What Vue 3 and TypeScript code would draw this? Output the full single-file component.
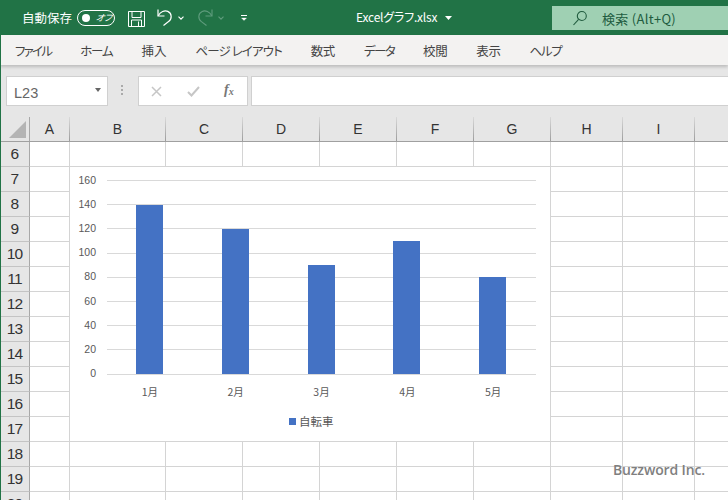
<script setup lang="ts">
const tabs = [
  { label: 'ファイル', track: -1.75 },
  { label: 'ホーム', track: -1.2 },
  { label: '挿入', track: 0 },
  { label: 'ページ レイアウト', track: -0.9 },
  { label: '数式', track: -0.4 },
  { label: 'データ', track: -1.6 },
  { label: '校閲', track: -0.4 },
  { label: '表示', track: -0.4 },
  { label: 'ヘルプ', track: -1.3 },
]
const columns = [
  { name: 'A', width: 40 },
  { name: 'B', width: 96 },
  { name: 'C', width: 77 },
  { name: 'D', width: 77 },
  { name: 'E', width: 77 },
  { name: 'F', width: 77 },
  { name: 'G', width: 77 },
  { name: 'H', width: 72 },
  { name: 'I', width: 72 },
  { name: 'J', width: 40 },
]
const rows = Array.from({ length: 15 }, (_, i) => i + 6)
const step = 24.2
const ticks = [160, 140, 120, 100, 80, 60, 40, 20, 0].map((value, i) => ({ value, top: i * step }))
const bars = [
  { label: '1月', value: 140 },
  { label: '2月', value: 120 },
  { label: '3月', value: 90 },
  { label: '4月', value: 110 },
  { label: '5月', value: 80 },
]
</script>

<template>
  <div class="app">
    <header class="title">
      <span class="autosave">自動保存</span>
      <span class="toggle"><i class="knob"></i><em>オフ</em></span>
      <svg class="save" width="17" height="16" viewBox="0 0 17 16" fill="none" stroke="#fff" stroke-width="1">
        <path d="M.5.500h16v15H.5z" />
        <path d="M4 .500v6h9v-6M3.500 15.500v-6.500h10v6.500M10.500 10.500v5" />
      </svg>
      <svg class="undo" width="16" height="17" viewBox="0 0 16 17" fill="none" stroke="#fff" stroke-width="1.200">
        <path d="M1 .500v6.500h6.500" />
        <path d="M1.200 6.800C3.500 2.800 7.500 1 10.800 2.400c4.300 1.800 4.400 7.600.8 10.200L6.500 16.500" />
      </svg>
      <svg class="chev" width="6" height="4" viewBox="0 0 6 4" fill="none" stroke="#fff" stroke-width="1.100"><path d="M.5.600 3 3.200 5.500.600" /></svg>
      <svg class="redo" width="16" height="17" viewBox="0 0 16 17" fill="none" stroke="#5f9c7d" stroke-width="1.100">
        <path d="M15 .500v6.500H8.500" />
        <path d="M14.800 6.800C12.500 2.800 8.500 1 5.200 2.400.9 4.200.8 10 4.400 12.600l5.100 3.900" />
      </svg>
      <svg class="chev dim" width="6" height="4" viewBox="0 0 6 4" fill="none" stroke="#5f9c7d" stroke-width="1.100"><path d="M.5.600 3 3.200 5.500.600" /></svg>
      <svg class="more" width="6" height="6" viewBox="0 0 6 6" fill="none" stroke="#fff" stroke-width="1">
        <path d="M0 .500h6" />
        <path d="M.5 3 3 5.500 5.500 3z" fill="#fff" stroke-width=".3" />
      </svg>
      <span class="file">Excelグラフ.xlsx</span>
      <svg class="caret" width="7" height="4" viewBox="0 0 7 4"><path d="M0 0h7L3.500 4z" fill="#fff" /></svg>
      <div class="search">
        <svg width="16" height="16" viewBox="0 0 16 16" fill="none" stroke="#215c3f" stroke-width="1.100">
          <circle cx="9.800" cy="6" r="4.500" />
          <path d="M6.600 9.300 1.500 15" />
        </svg>
        <span>検索 (Alt+Q)</span>
      </div>
    </header>

    <nav class="tabs">
      <span v-for="tab in tabs" :key="tab.label" :style="{ letterSpacing: tab.track + 'px' }">{{ tab.label }}</span>
    </nav>

    <section class="formula">
      <div class="namebox">
        <span>L23</span>
        <i class="namecaret"></i>
      </div>
      <span class="grip"></span>
      <div class="buttons">
        <svg width="11" height="11" viewBox="0 0 11 11" stroke="#c6c6c6" stroke-width="1.500"><path d="M1 1l9 9M10 1l-9 9" /></svg>
        <svg class="check" width="13" height="11" viewBox="0 0 13 11" fill="none" stroke="#c6c6c6" stroke-width="2"><path d="M1 6l3.500 3.500L12 1" /></svg>
        <span class="fx">f<sub>x</sub></span>
      </div>
      <div class="input"></div>
    </section>

    <section class="sheet">
      <div class="colhead">
        <div class="corner"><i></i></div>
        <div v-for="c in columns" :key="c.name" class="col" :style="{ width: c.width + 'px' }">{{ c.name === 'J' ? '' : c.name }}</div>
      </div>
      <div v-for="r in rows" :key="r" class="row">
        <div class="rowhead">{{ r }}</div>
        <div v-for="c in columns" :key="c.name" class="cell" :style="{ width: c.width + 'px' }"></div>
      </div>

      <div class="chart">
        <div class="plot">
          <div v-for="t in ticks" :key="t.value" class="tick" :style="{ top: t.top + 'px' }">
            <span>{{ t.value }}</span>
            <i></i>
          </div>
          <div class="bars">
            <div v-for="b in bars" :key="b.label" class="slot">
              <div class="bar" :style="{ height: (b.value * step) / 20 + 'px' }"></div>
            </div>
          </div>
        </div>
        <div class="labels">
          <span v-for="b in bars" :key="b.label">{{ b.label }}</span>
        </div>
        <div class="legend"><i></i>自転車</div>
      </div>

      <div class="mark">Buzzword Inc.</div>
    </section>
    <div class="edge"></div>
  </div>
</template>

<style>
html, body { margin: 0; background: #fff; overflow: hidden; }
</style>

<style scoped>
.app {
  width: 728px;
  height: 500px;
  overflow: hidden;
  position: relative;
  font-family: "Noto Sans CJK JP", "Open Sans", sans-serif;
  font-feature-settings: "palt";
}
.edge { position: absolute; left: 0; top: 0; bottom: 0; width: 1px; background: #217346; }
.title {
  height: 35px;
  background: #217346;
  display: flex;
  align-items: center;
  color: #fff;
  font-size: 12px;
}
.autosave { margin-left: 22px; width: 48px; font-size: 12.500px; white-space: nowrap; }
.toggle {
  margin-left: 7px;
  width: 36px;
  height: 14px;
  border: 1px solid #fff;
  border-radius: 8px;
  display: flex;
  align-items: center;
}
.knob { width: 8px; height: 8px; border-radius: 50%; background: #fff; margin-left: 4px; }
.toggle em { font-size: 9px; margin-left: 6px; transform: skewX(-10deg); }
.save { margin-left: 13px; margin-top: 2px; }
.undo { margin-left: 12px; }
.chev { margin-left: 5px; margin-top: 1px; }
.redo { margin-left: 13px; }
.chev.dim { margin-left: 5px; }
.more { margin-left: 17px; margin-top: 1px; }
.file { position: absolute; left: 356px; top: 8px; line-height: 17px; font-size: 12px; letter-spacing: -0.2px; white-space: nowrap; }
.caret { position: absolute; left: 445px; top: 16px; }
.search {
  position: absolute;
  left: 552px;
  top: 6px;
  width: 176px;
  height: 24px;
  background: #9fd0b3;
  display: flex;
  align-items: center;
  color: #215c3f;
  font-size: 13px;
  letter-spacing: 0.3px;
}
.search svg { margin-left: 20px; }
.search span { margin-left: 14px; }
.tabs {
  height: 30px;
  background: #f3f2f1;
  display: flex;
  align-items: center;
  font-size: 12.500px;
  color: #444;
  padding-left: 15px;
  gap: 29px;
  box-shadow: 0 2px 3px rgba(0, 0, 0, 0.18);
  position: relative;
  white-space: nowrap;
}
.formula {
  height: 52px;
  background: #e6e6e6;
  display: flex;
  padding: 11px 0 0 6px;
  box-sizing: border-box;
  align-items: flex-start;
}
.namebox {
  width: 102px;
  height: 30px;
  background: #fff;
  border: 1px solid #d0d0d0;
  box-sizing: border-box;
  display: flex;
  align-items: center;
  justify-content: space-between;
  padding: 3px 4px 0 7px;
  font: 14.500px "Liberation Sans", sans-serif;
  color: #666;
}
.namecaret { border: 3.500px solid transparent; border-top: 4px solid #666; border-bottom: 0; width: 0; height: 0; margin-right: 2px; margin-top: -5px; }
.grip {
  width: 2px;
  height: 10px;
  margin: 9px 14px 0 13px;
  background: repeating-linear-gradient(#aaa 0 2px, transparent 2px 4px);
}
.buttons {
  width: 110px;
  height: 30px;
  margin-left: 1px;
  background: #fff;
  border: 1px solid #d0d0d0;
  box-sizing: border-box;
  display: flex;
  align-items: center;
  padding-left: 12px;
  gap: 24px;
}
.check { margin-left: 1px; }
.fx { font: italic 700 14px "Liberation Serif", serif; color: #777; margin-top: -3px; }
.fx sub { font-size: 10px; vertical-align: -1px; line-height: 0; }
.input {
  flex: 1;
  height: 30px;
  margin-left: 3px;
  background: #fff;
  border: 1px solid #d0d0d0;
  border-right: 0;
  box-sizing: border-box;
}
.sheet { position: relative; }
.colhead {
  display: flex;
  height: 25px;
  background: #e6e6e6;
  border-bottom: 1px solid #a0a0a0;
  box-sizing: border-box;
}
.corner {
  width: 29px;
  flex: none;
  border-right: 1px solid #a8a8a8;
  position: relative;
}
.corner i {
  position: absolute;
  right: 3px;
  bottom: 3px;
  width: 0;
  height: 0;
  border-left: 17px solid transparent;
  border-bottom: 17px solid #b4b4b4;
}
.col {
  flex: none;
  box-sizing: border-box;
  border-right: 1px solid transparent;
  border-image: linear-gradient(#dcdcdc, #9a9a9a) 1;
  text-align: center;
  font: 14px/24px "Liberation Sans", sans-serif;
  color: #333;
}
.row { display: flex; height: 25px; }
.rowhead {
  width: 29px;
  flex: none;
  background: #e6e6e6;
  border-right: 1px solid #a8a8a8;
  border-bottom: 1px solid #c4c4c4;
  height: 24px;
  text-align: center;
  font: 15.500px/24px "Liberation Sans", sans-serif;
  letter-spacing: -0.8px;
  color: #333;
}
.cell {
  flex: none;
  box-sizing: border-box;
  border-right: 1px solid #d4d4d4;
  border-bottom: 1px solid #d4d4d4;
}
.chart {
  position: absolute;
  left: 70px;
  top: 50px;
  width: 480px;
  height: 274px;
  background: #fff;
  color: #595959;
  font-size: 10.500px;
}
.plot { position: absolute; left: 0; top: 13px; width: 466px; height: 194px; }
.tick { position: absolute; left: 0; right: 0; display: flex; align-items: center; height: 1px; }
.tick span { width: 26px; text-align: right; font-family: "Liberation Sans", sans-serif; margin-top: -2px; }
.tick i { position: absolute; left: 37px; right: 0; height: 1px; background: #d9d9d9; }
.bars {
  position: absolute;
  left: 36.700px;
  right: 0.500px;
  top: 0;
  height: 194px;
  display: flex;
  align-items: flex-end;
}
.slot { flex: 1; display: flex; justify-content: center; }
.bar { width: 27px; background: #4472c4; }
.labels {
  position: absolute;
  left: 37px;
  right: 14px;
  top: 217px;
  display: flex;
}
.labels span { flex: 1; text-align: center; line-height: 15px; }
.legend {
  position: absolute;
  left: 219px;
  top: 247px;
  display: flex;
  align-items: center;
  font-size: 11.500px;
  line-height: 15px;
}
.legend i { width: 7px; height: 7px; background: #4472c4; margin-right: 3px; }
.mark {
  position: absolute;
  left: 613px;
  top: 344px;
  color: #7f7f7f;
  font: 600 14px/18px "Open Sans", sans-serif;
  letter-spacing: -0.15px;
  white-space: nowrap;
}
</style>
